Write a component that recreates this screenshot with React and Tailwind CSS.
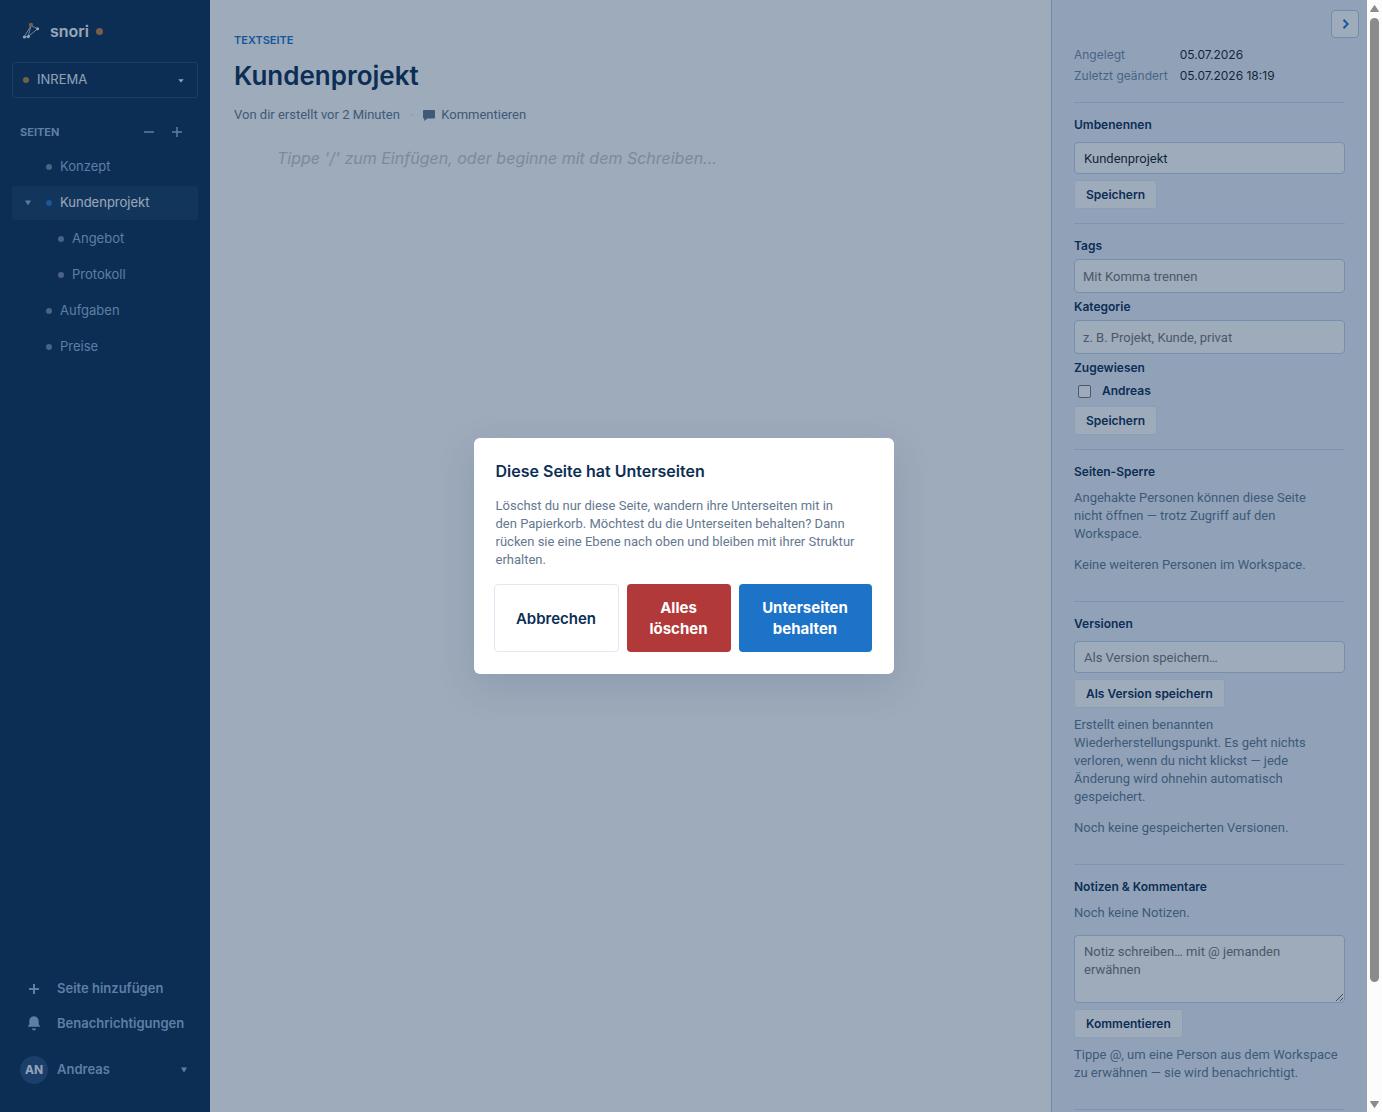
import React from "react";

const BODY = "font-['Roboto',sans-serif] text-[13px] leading-[18px]";

function Logo() {
  return (
    <svg width="18" height="18" viewBox="0 0 18 18" fill="none" aria-hidden="true">
      <path
        d="M9 3.5L15.6 6.8M9 3.5L2.2 15M9 3.5L6.2 14.6M15.6 6.8L6.2 14.6M2.2 15L6.2 14.6"
        stroke="#c3d3e5"
        strokeWidth="0.9"
      />
      <circle cx="9" cy="3" r="2.2" fill="#bd7f42" />
      <circle cx="15.6" cy="6.8" r="1.5" fill="#eef5fc" />
      <circle cx="2.4" cy="15" r="1.6" fill="#eef5fc" />
      <circle cx="6.3" cy="14.6" r="1.6" fill="#eef5fc" />
    </svg>
  );
}

function Caret({ className }) {
  return (
    <svg width="6" height="6" viewBox="0 0 6 6" className={className} aria-hidden="true">
      <path d="M0 0.5h6L3 5.5z" fill="currentColor" />
    </svg>
  );
}

function Plus({ bold }) {
  return (
    <svg width="10" height="10" viewBox="0 0 10 10" aria-hidden="true">
      <path d="M5 0v10M0 5h10" stroke="currentColor" strokeWidth={bold ? 2 : 1.5} />
    </svg>
  );
}

const pages = [
  { name: "Konzept" },
  { name: "Kundenprojekt", active: true },
  { name: "Angebot", child: true },
  { name: "Protokoll", child: true },
  { name: "Aufgaben" },
  { name: "Preise" },
];

function Sidebar() {
  return (
    <nav className="flex w-[210px] shrink-0 flex-col bg-[#0c2e54] px-3 text-[#94b4db]">
      <div className="mt-5 flex h-[22px] items-center pl-[10px]">
        <Logo />
        <span className="ml-[10px] text-base font-semibold text-[#f4f9fd]">snori</span>
        <span className="ml-[7px] size-[7px] rounded-full bg-[#bd7f42]" />
      </div>

      <div className="relative mt-5 h-9">
        <select
          aria-label="Workspace"
          className="h-9 w-full appearance-none rounded-[3px] border border-[#274b76] bg-transparent pl-6 text-[13px] text-[#e6eff8]"
        >
          <option>INREMA</option>
        </select>
        <span className="pointer-events-none absolute top-[15px] left-[11px] size-[6px] rounded-full bg-[#bd7f42]" />
        <svg
          width="6"
          height="4"
          viewBox="0 0 6 4"
          className="pointer-events-none absolute top-[17px] right-[14px] text-[#f4f9fd]"
          aria-hidden="true"
        >
          <path d="M0.3 0.3h5.4L3 3.5z" fill="currentColor" />
        </svg>
      </div>

      <div className="mt-5 flex h-7 items-center pl-2">
        <h2 className="flex-1 text-[11px] font-bold">SEITEN</h2>
        <button aria-label="Alle einklappen" className="grid size-7 place-items-center">
          <svg width="10" height="10" viewBox="0 0 10 10" aria-hidden="true">
            <path d="M0 5h10" stroke="currentColor" strokeWidth="1.5" />
          </svg>
        </button>
        <button aria-label="Neue Seite" className="mr-[7px] grid size-7 place-items-center">
          <Plus />
        </button>
      </div>

      <ul className="mt-1 flex flex-col gap-[2px] text-[13px]">
        {pages.map((p) => (
          <li key={p.name}>
            <a
              href="#"
              className={
                "flex h-[34px] items-center rounded-[3px] " +
                (p.active ? "bg-[#173b62] text-[#f4f9fd] " : "") +
                (p.child ? "pl-[46px]" : p.active ? "pl-[13px]" : "pl-[34px]")
              }
            >
              {p.active && <Caret className="mr-[15px] text-[#8fb0d4]" />}
              <span className={"mr-2 size-[6px] rounded-full " + (p.active ? "bg-[#1c73c8]" : "bg-[#7288a5]")} />
              {p.name}
            </a>
          </li>
        ))}
      </ul>

      <div className="mt-auto flex flex-col pb-7 pl-2 text-[13px] font-semibold">
        <button className="flex h-[35px] items-center gap-[9px]">
          <span className="grid w-7 place-items-center">
            <Plus bold />
          </span>
          Seite hinzufügen
        </button>
        <button className="flex h-[35px] items-center gap-[9px]">
          <span className="grid w-7 place-items-center">
            <svg width="12" height="15" viewBox="0 0 12 15" fill="currentColor" aria-hidden="true">
              <path d="M6 0.2C3 0.2 1.3 2.5 1.3 5.3V8.2L0.1 10V10.8H11.9V10L10.700 8.2V5.3C10.700 2.500 9 0.2 6 0.2Z" />
              <path d="M4 12.5h4a2 2 0 0 1-4 0z" />
            </svg>
          </span>
          Benachrichtigungen
        </button>
        <button className="mt-[15px] flex h-7 items-center gap-[9px]">
          <span className="grid size-7 place-items-center rounded-full bg-[#254c78] text-xs font-bold text-[#eef5fc]">
            AN
          </span>
          Andreas
          <Caret className="mr-[11px] ml-auto" />
        </button>
      </div>
    </nav>
  );
}

function Editor() {
  return (
    <main className="min-w-0 flex-1 bg-white px-6 pt-8">
      <p className="text-[11px] leading-4 font-semibold text-[#1c73c8]">TEXTSEITE</p>
      <h1 className="mt-[10px] text-[26px] leading-9 font-semibold text-[#0c2e54]">Kundenprojekt</h1>
      <div className={"mt-3 flex items-center text-[#5f7890] " + BODY}>
        <span>Von dir erstellt vor 2 Minuten</span>
        <span className="mx-[10px] text-[#c9d6e4]">·</span>
        <button className="flex items-center gap-[6px]">
          <svg width="12" height="11" viewBox="0 0 12 11" fill="currentColor" aria-hidden="true">
            <path d="M1 0h10a1 1 0 0 1 1 1v6.500a1 1 0 0 1-1 1H4.200L1.200 11V8.500H1a1 1 0 0 1-1-1V1a1 1 0 0 1 1-1z" />
          </svg>
          Kommentieren
        </button>
      </div>
      <p className="mt-[22px] pl-[43px] text-base text-[#c8c8c8] italic">
        Tippe '/' zum Einfügen, oder beginne mit dem Schreiben...
      </p>
    </main>
  );
}

const INPUT =
  "block w-full rounded-[4px] border border-[#bcd0e6] bg-white placeholder:text-[#757575] text-[#1a1f27] " + BODY;
const SECTION = "border-t border-[#ccdbec] pt-[13px]";
const HEADING = "block text-xs leading-[18px] font-semibold text-[#0c2e54]";
const HINT = "text-[#5f7890] " + BODY;

function SmallButton({ children }) {
  return (
    <button className="block h-[29px] w-fit rounded-[3px] border border-[#e0eaf5] bg-white px-[11px] text-xs font-semibold text-[#0c2e54]">
      {children}
    </button>
  );
}

function Details() {
  return (
    <aside className="relative w-[316px] shrink-0 overflow-hidden border-l border-[#b3cae4] bg-[#e9f1fb] px-[22px] pt-11">
      <button
        aria-label="Seitenleiste schließen"
        className="absolute top-[10px] right-2 grid size-7 place-items-center rounded-[4px] border border-[#b3cae4] bg-white text-[#1c73c8]"
      >
        <svg width="8" height="10" viewBox="0 0 8 10" fill="none" aria-hidden="true">
          <path d="M2.500 0.800L6.700 5L2.500 9.200" stroke="currentColor" strokeWidth="2" />
        </svg>
      </button>

      <dl className="grid grid-cols-[auto_1fr] gap-x-3 pb-4 text-xs leading-[21px]">
        <dt className="text-[#7389a3]">Angelegt</dt>
        <dd className="text-[#1a1f27]">05.07.2026</dd>
        <dt className="text-[#7389a3]">Zuletzt geändert</dt>
        <dd className="text-[#1a1f27]">05.07.2026 18:19</dd>
      </dl>

      <section className={SECTION + " pb-[14px]"}>
        <label htmlFor="rename" className={HEADING}>
          Umbenennen
        </label>
        <input id="rename" defaultValue="Kundenprojekt" className={INPUT + " mt-2 mb-[6px] h-8 px-[9px]"} />
        <SmallButton>Speichern</SmallButton>
      </section>

      <section className={SECTION + " pb-[14px]"}>
        <label htmlFor="tags" className={HEADING}>
          Tags
        </label>
        <input id="tags" placeholder="Mit Komma trennen" className={INPUT + " mt-1 mb-[5px] h-[34px] px-2"} />
        <label htmlFor="category" className={HEADING}>
          Kategorie
        </label>
        <input id="category" placeholder="z. B. Projekt, Kunde, privat" className={INPUT + " mt-1 mb-[5px] h-[34px] px-2"} />
        <fieldset>
          <legend className={HEADING}>Zugewiesen</legend>
          <label className="mt-1 mb-[5px] flex h-5 items-center gap-[11px] pl-1 text-xs font-semibold text-[#0c2e54]">
            <input
              type="checkbox"
              className="size-[13px] appearance-none rounded-[2px] border border-[#767676] bg-white"
            />
            Andreas
          </label>
        </fieldset>
        <SmallButton>Speichern</SmallButton>
      </section>

      <section className={SECTION + " pb-[27px]"}>
        <h3 className={HEADING}>Seiten-Sperre</h3>
        <p className={"mt-2 " + HINT}>
          Angehakte Personen können diese Seite
          <br />
          nicht öffnen — trotz Zugriff auf den
          <br />
          Workspace.
        </p>
        <p className={"mt-[13px] " + HINT}>Keine weiteren Personen im Workspace.</p>
      </section>

      <section className={SECTION + " pb-[27px]"}>
        <h3 className={HEADING}>Versionen</h3>
        <input
          aria-label="Als Version speichern"
          placeholder="Als Version speichern…"
          className={INPUT + " mt-2 mb-[6px] h-8 px-[9px]"}
        />
        <SmallButton>Als Version speichern</SmallButton>
        <p className={"mt-2 " + HINT}>
          Erstellt einen benannten Wiederherstellungspunkt. Es geht nichts verloren, wenn du nicht klickst — jede
          Änderung wird ohnehin automatisch gespeichert.
        </p>
        <p className={"mt-[13px] " + HINT}>Noch keine gespeicherten Versionen.</p>
      </section>

      <section className={SECTION + " pb-[27px]"}>
        <h3 className={HEADING}>Notizen &amp; Kommentare</h3>
        <p className={"mt-2 " + HINT}>Noch keine Notizen.</p>
        <textarea
          aria-label="Notiz schreiben"
          placeholder="Notiz schreiben… mit @ jemanden erwähnen"
          className={INPUT + " mt-[13px] mb-[6px] h-[68px] resize-y px-[9px] py-[7px]"}
        />
        <SmallButton>Kommentieren</SmallButton>
        <p className={"mt-2 " + HINT}>
          Tippe @, um eine Person aus dem Workspace zu erwähnen — sie wird benachrichtigt.
        </p>
      </section>
      <hr className="border-[#ccdbec]" />
    </aside>
  );
}

function DeleteDialog() {
  const button = "rounded-[4px] text-[15px] leading-[21px]";
  return (
    <div className="absolute inset-0 grid place-items-center bg-[#0c2e54]/40">
      <div
        role="dialog"
        aria-modal="true"
        aria-labelledby="dialog-title"
        className="w-[420px] rounded-[6px] bg-white p-[22px] shadow-[0_12px_40px_rgba(12,46,84,0.12)]"
      >
        <h2 id="dialog-title" className="text-base leading-[22px] font-semibold text-[#0c2e54]">
          Diese Seite hat Unterseiten
        </h2>
        <p className={"mt-[15px] text-[#65788f] " + BODY}>
          Löschst du nur diese Seite, wandern ihre Unterseiten mit in
          <br />
          den Papierkorb. Möchtest du die Unterseiten behalten? Dann
          <br />
          rücken sie eine Ebene nach oben und bleiben mit ihrer Struktur
          <br />
          erhalten.
        </p>
        <div className="mt-[15px] flex h-[68px] justify-end gap-2">
          <button
            className={
              "w-[125px] shrink-0 border border-[#dfe9f5] bg-white font-semibold text-[#0c2e54] " + button
            }
          >
            Abbrechen
          </button>
          <button className={"w-[104px] shrink-0 bg-[#b1393a] px-5 font-bold text-white " + button}>
            Alles löschen
          </button>
          <button className={"w-[133px] shrink-0 bg-[#1c73c8] px-5 font-bold text-white " + button}>
            Unterseiten behalten
          </button>
        </div>
      </div>
    </div>
  );
}

function ScrollTrack() {
  return (
    <div className="flex w-[15px] shrink-0 flex-col items-center bg-[#fcfcfc] pt-[5px] pb-1 text-[#8b8b8b]" aria-hidden="true">
      <svg width="9" height="7" viewBox="0 0 9 7">
        <path d="M4.500 0.500L8.500 6.500H0.500z" fill="currentColor" stroke="currentColor" strokeLinejoin="round" />
      </svg>
      <div className="mt-[6px] min-h-0 flex-1">
        <div className="h-[89%] w-[9px] rounded-full bg-[#8b8b8b]" />
      </div>
      <svg width="9" height="7" viewBox="0 0 9 7">
        <path d="M4.500 6.500L8.500 0.500H0.500z" fill="currentColor" stroke="currentColor" strokeLinejoin="round" />
      </svg>
    </div>
  );
}

export default function App() {
  return (
    <div className="flex h-screen overflow-hidden font-['Inter',sans-serif]">
      <div className="relative flex min-w-0 flex-1">
        <Sidebar />
        <Editor />
        <Details />
        <DeleteDialog />
      </div>
      <ScrollTrack />
    </div>
  );
}
